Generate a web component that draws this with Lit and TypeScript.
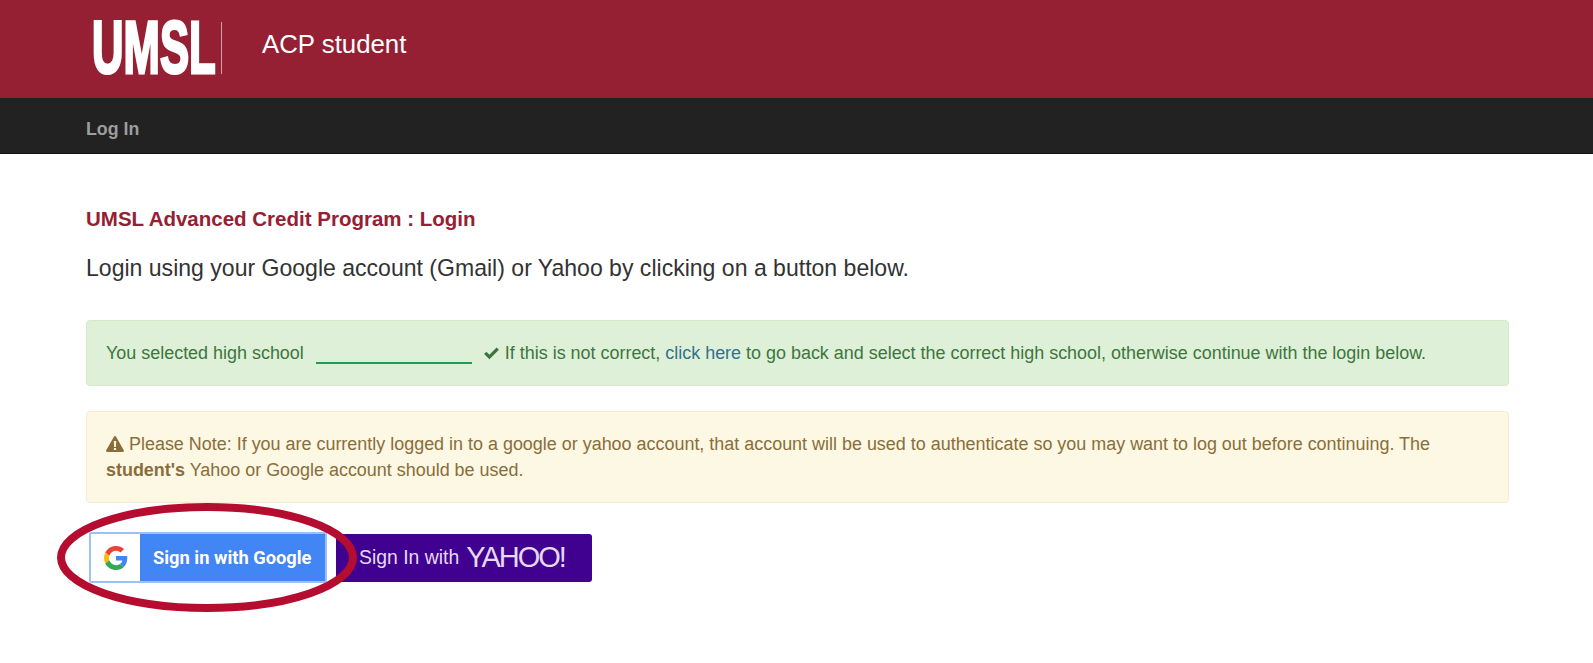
import { LitElement, html, css } from "lit";
import { customElement } from "lit/decorators.js";

@customElement("app-root")
export class AppRoot extends LitElement {
  static styles = css`
    :host { display: block; position: relative; height: 663px; overflow: hidden; background: #fff; font-family: "Liberation Sans", Arial, sans-serif; color: #333; }
    .top { height: 98px; background: #962033; display: flex; align-items: center; padding-left: 92px; box-sizing: border-box; }
    .logo { width: 123px; height: 54px; margin-top: -3px; display: flex; align-items: center; color: #fff; font-weight: 700; font-size: 74px; line-height: 54px; }
    .logo span { display: inline-block; transform: scaleX(.59); transform-origin: left center; -webkit-text-stroke: 3px #fff; white-space: nowrap; }
    .rule { width: 1px; height: 52px; margin: -3px 0 0 6px; background: #d0a0a8; }
    .site { margin-left: 40px; margin-top: -9px; color: #fff; font-size: 25.800px; }
    .nav { height: 56px; background: #222; display: flex; align-items: center; padding: 8px 0 0 86px; box-sizing: border-box; border-bottom: 1px solid #111; }
    .nav a { color: #9d9d9d; font-weight: 700; font-size: 17.800px; }
    .main { padding: 55px 84px 0 86px; }
    h1 { margin: 0; font-size: 20.500px; line-height: 20px; color: #962033; }
    .lead { margin: 24px 0 0; font-size: 23.050px; line-height: 30px; color: #333; }
    .alert { box-sizing: border-box; border: 1px solid; border-radius: 4px; padding: 0 19px; font-size: 17.950px; line-height: 26px; }
    .ok { margin-top: 37px; height: 66px; background: #dff0d8; border-color: #d6e9c6; color: #3c763d; display: flex; align-items: center; white-space: pre; }
    .ok a { color: #31708f; }
    .blank { display: inline-block; width: 156px; height: 20px; border-bottom: 2px solid #1f9d55; margin: 0 11px 0 12px; }
    .tick { width: 17px; height: 15px; margin-right: 5px; }
    .warn { margin-top: 25px; height: 92px; background: #fcf8e3; border-color: #faebcc; color: #8a6d3b; padding-top: 19px; }
    .warn svg { width: 18px; height: 16px; vertical-align: -2px; margin-right: 5px; }
    .btns { display: flex; align-items: center; margin: 29px 0 0 3px; }
    .g { box-sizing: border-box; width: 238px; height: 51px; background: #4285f4; border: 2px solid #9dc0f9; border-radius: 2px; display: flex; align-items: center; color: #fff; font: 700 18.300px Roboto, "Liberation Sans", sans-serif; }
    .g .box { width: 49px; height: 47px; background: #fff; display: flex; align-items: center; justify-content: center; margin-right: 13px; }
    .g svg { width: 24px; height: 24px; }
    .y { box-sizing: border-box; width: 256px; height: 48px; margin-left: 9px; padding-left: 23px; background: #400090; border-radius: 3px; display: flex; align-items: center; color: #e4d9f0; font-size: 19.400px; white-space: pre; }
    .yh { font-size: 29px; letter-spacing: -2px; margin-left: 7px; color: #e4d9f0; font-weight: 400; }
    .ring { position: absolute; left: 57px; top: 503px; width: 300px; height: 109px; pointer-events: none; }
  `;

  render() {
    return html`
      <div class="top">
        <div class="logo"><span>UMSL</span></div>
        <div class="rule"></div>
        <div class="site">ACP student</div>
      </div>
      <div class="nav"><a>Log In</a></div>
      <div class="main">
        <h1>UMSL Advanced Credit Program : Login</h1>
        <p class="lead">Login using your Google account (Gmail) or Yahoo by clicking on a button below.</p>
        <div class="alert ok"><span>You selected high school</span><span class="blank"></span><svg class="tick" viewBox="0 0 16 14"><path fill="#3c763d" d="M1 7.5 3.2 5.3 6 8.1 12.8 1.3 15 3.5 6 12.5Z"/></svg><span>If this is not correct, <a>click here</a> to go back and select the correct high school, otherwise continue with the login below.</span></div>
        <div class="alert warn"><svg viewBox="0 0 18 16"><path fill="#8a6d3b" fill-rule="evenodd" d="M9 0c.5 0 .9.3 1.1.7l7.7 13.500c.4.8-.1 1.800-1.100 1.800H1.300c-1 0-1.500-1-1.100-1.800L7.900.7C8.100.3 8.500 0 9 0ZM7.800 5l.3 6h1.800l.3-6ZM7.900 12v2h2.200v-2Z"/></svg>Please Note: If you are currently logged in to a google or yahoo account, that account will be used to authenticate so you may want to log out before continuing. The<br><b>student's</b> Yahoo or Google account should be used.</div>
        <div class="btns">
          <div class="g"><div class="box"><svg viewBox="0 0 48 48"><path fill="#EA4335" d="M24 9.500c3.500 0 6.700 1.200 9.200 3.600l6.900-6.900C35.900 2.400 30.500 0 24 0 14.600 0 6.500 5.400 2.600 13.200l8 6.200C12.500 13.700 17.800 9.500 24 9.500z"/><path fill="#4285F4" d="M46.500 24.500c0-1.600-.1-3.100-.4-4.500H24v9h12.600c-.5 2.900-2.200 5.400-4.700 7l7.700 6c4.500-4.200 6.900-10.300 6.900-17.500z"/><path fill="#FBBC05" d="M10.500 28.600c-.5-1.400-.8-3-.8-4.600s.3-3.200.8-4.600l-8-6.200C.9 16.500 0 20.100 0 24s.9 7.500 2.600 10.800z"/><path fill="#34A853" d="M24 48c6.500 0 11.900-2.100 15.900-5.800l-7.700-6c-2.200 1.500-4.900 2.300-8.200 2.300-6.200 0-11.500-4.200-13.400-9.900l-8 6.200C6.500 42.600 14.600 48 24 48z"/></svg></div>Sign in with Google</div>
          <div class="y">Sign In with<span class="yh">YAHOO!</span></div>
        </div>
      </div>
      <svg class="ring" viewBox="0 0 300 109"><ellipse cx="150" cy="54.500" rx="146" ry="50.500" fill="none" stroke="#b50d2f" stroke-width="8"/></svg>
    `;
  }
}
